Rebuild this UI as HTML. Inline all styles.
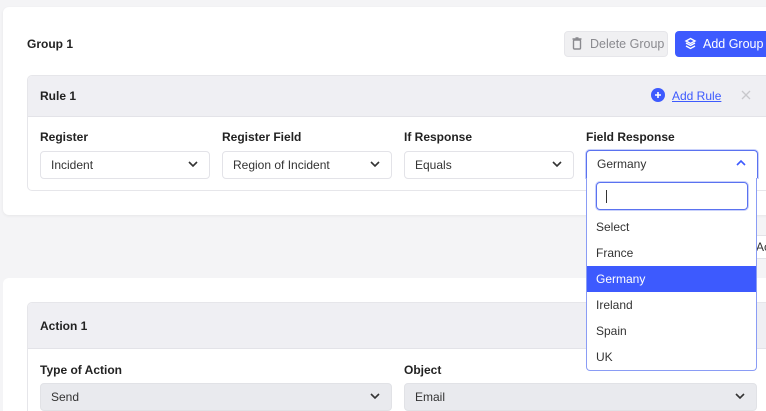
<!DOCTYPE html>
<html><head><style>
*{box-sizing:border-box;margin:0;padding:0}
html,body{width:766px;height:411px;overflow:hidden}
body{background:#f4f4f6;font-family:"Liberation Sans",sans-serif;font-size:12px;color:#222;position:relative}
.a{position:absolute}
.card{background:#fff;border-radius:6px}
.b{font-weight:bold;font-size:12px;color:#222}
.sel{position:absolute;height:28px;border:1px solid #e3e3e8;border-radius:4px;background:#fff;padding:0 10px;line-height:26px;color:#333}
.chev{position:absolute;right:11px;top:8px}
.opt{position:absolute;left:0;width:100%;height:26px;line-height:26px;padding-left:9px;color:#333}
</style></head><body>
<div class="a card" style="left:3px;top:7px;width:770px;height:208px;box-shadow:0 1px 3px rgba(0,0,0,.06)"></div>
<div class="a b" style="left:27px;top:37px">Group 1</div>
<div class="a" style="left:564px;top:31px;width:104px;height:26px;background:#f0f0f2;border:1px solid #e6e6ea;border-radius:4px;color:#8a8a8f;line-height:24px;padding-left:25px;font-size:12.5px">Delete Group</div>
<svg class="a" style="left:572px;top:37px" width="10" height="13" viewBox="0 0 10 13"><rect x="1.5" y="3" width="7" height="9" rx="1" fill="none" stroke="#8a8a8f" stroke-width="1.4"/><path d="M0.5 2h9M3.5 1h3" stroke="#8a8a8f" stroke-width="1.4"/></svg>
<div class="a" style="left:675px;top:31px;width:100px;height:26px;background:#3d5afe;border-radius:4px;color:#fff;line-height:26px;padding-left:28px;font-size:12.5px">Add Group</div>
<svg class="a" style="left:684px;top:37px" width="13" height="13" viewBox="0 0 13 13"><path d="M2 6l4.5 2.5L11 6M2 9l4.5 2.5L11 9M6.5 1.5L11 4 6.5 6.5 2 4z" fill="none" stroke="#fff" stroke-width="1.4"/></svg>
<div class="a" style="left:27px;top:75px;width:750px;height:116px;border:1px solid #e6e6ea;border-radius:5px;background:#fff;overflow:hidden"><div style="height:41px;background:#efeff3;border-bottom:1px solid #e3e3e8"></div></div>
<div class="a b" style="left:40px;top:89px">Rule 1</div>
<svg class="a" style="left:651px;top:88px" width="14" height="14"><circle cx="7" cy="7" r="7" fill="#3d5afe"/><path d="M7 4v6M4 7h6" stroke="#fff" stroke-width="1.6"/></svg>
<div class="a" style="left:672px;top:89px;color:#3d5afe;text-decoration:underline">Add Rule</div>
<svg class="a" style="left:741px;top:90px" width="10" height="10"><path d="M1 1l8 8M9 1l-8 8" stroke="#c8c8cc" stroke-width="1.3"/></svg>
<div class="a b" style="left:40px;top:130px">Register</div>
<div class="a b" style="left:222px;top:130px">Register Field</div>
<div class="a b" style="left:404px;top:130px">If Response</div>
<div class="a b" style="left:586px;top:130px">Field Response</div>
<div class="sel" style="left:40px;top:151px;width:170px">Incident<svg class="chev" width="10" height="8"><path d="M1 2l4 4 4-4" fill="none" stroke="#333" stroke-width="1.6"/></svg></div>
<div class="sel" style="left:222px;top:151px;width:170px">Region of Incident<svg class="chev" width="10" height="8"><path d="M1 2l4 4 4-4" fill="none" stroke="#333" stroke-width="1.6"/></svg></div>
<div class="sel" style="left:404px;top:151px;width:170px">Equals<svg class="chev" width="10" height="8"><path d="M1 2l4 4 4-4" fill="none" stroke="#333" stroke-width="1.6"/></svg></div>
<div class="sel" style="left:586px;top:150px;width:172px;border:1.5px solid #5a72f0;border-bottom:none;border-radius:4px 4px 0 0;box-shadow:0 0 0 1px #c9d1fb">Germany<svg class="chev" width="10" height="8"><path d="M1 6l4-4 4 4" fill="none" stroke="#3d5afe" stroke-width="1.6"/></svg></div>
<div class="a" style="left:750px;top:235px;width:30px;height:24px;border:1px solid #e3e3e8;background:#fff;border-radius:3px;line-height:22px;padding-left:5px;color:#333">Ac</div>
<div class="a card" style="left:3px;top:278px;width:770px;height:140px"></div>
<div class="a" style="left:27px;top:302px;width:750px;height:120px;border:1px solid #e6e6ea;border-radius:5px;background:#fff;overflow:hidden"><div style="height:46px;background:#efeff3;border-bottom:1px solid #e3e3e8"></div></div>
<div class="a b" style="left:40px;top:319px">Action 1</div>
<div class="a b" style="left:40px;top:363px">Type of Action</div>
<div class="a b" style="left:404px;top:363px">Object</div>
<div class="sel" style="left:40px;top:383px;width:352px;background:#e9eaee;border-color:#e1e2e6">Send<svg class="chev" width="10" height="8"><path d="M1 2l4 4 4-4" fill="none" stroke="#333" stroke-width="1.6"/></svg></div>
<div class="sel" style="left:404px;top:383px;width:353px;background:#e9eaee;border-color:#e1e2e6">Email<svg class="chev" width="10" height="8"><path d="M1 2l4 4 4-4" fill="none" stroke="#333" stroke-width="1.6"/></svg></div>
<div class="a" style="left:586px;top:178px;width:171px;height:193px;background:#fff;border:1px solid #8a9cf5;border-top:none;border-radius:0 0 4px 4px">
<div class="a" style="left:9px;top:4px;width:152px;height:28px;border:1.5px solid #5a72f0;border-radius:4px;box-shadow:0 0 0 1px #c9d1fb"><div class="a" style="left:9px;top:7px;width:1px;height:13px;background:#333"></div></div>
<div class="opt" style="top:36px">Select</div>
<div class="opt" style="top:62px">France</div>
<div class="opt" style="top:88px;background:#3d5afe;color:#fff">Germany</div>
<div class="opt" style="top:114px">Ireland</div>
<div class="opt" style="top:140px">Spain</div>
<div class="opt" style="top:166px">UK</div>
</div>
</body></html>
